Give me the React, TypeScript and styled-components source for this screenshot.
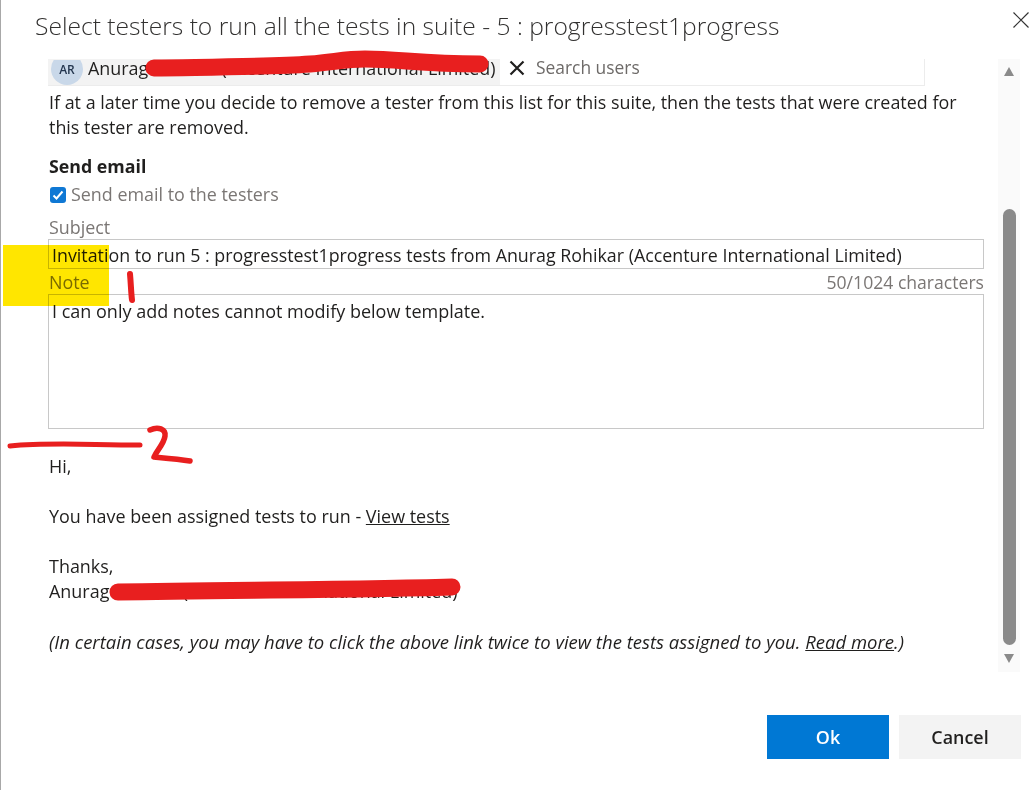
import React from "react";
import styled, { createGlobalStyle } from "styled-components";

const GlobalStyle = createGlobalStyle`
  html, body {
    margin: 0;
    padding: 0;
    background: #fff;
  }
  body {
    font-family: "Open Sans", "Noto Sans", "Liberation Sans", sans-serif;
  }
  svg {
    display: block;
  }
`;

function App() {
  return (
    <Page>
      <GlobalStyle />
      <Header>
        <Title>Select testers to run all the tests in suite - 5 : progresstest1progress</Title>
        <CloseButton>
          <svg width="16" height="16" viewBox="0 0 16 16" fill="none" stroke="#333" strokeWidth="1.2">
            <path d="M0.5 0.5 15.5 15.5M15.5 0.5 0.5 15.5" />
          </svg>
        </CloseButton>
      </Header>
      <Main>
        <Content>
          <Picker>
            <Chip>
              <Avatar>AR</Avatar>
              <ChipName>Anurag Rohikar (Accenture International Limited)</ChipName>
              <ChipRemove>
                <svg width="16" height="16" viewBox="0 0 16 16" fill="none" stroke="#201f1e" strokeWidth="2.2">
                  <path d="M1.5 1.5 14.5 14.5M14.5 1.5 1.5 14.5" />
                </svg>
              </ChipRemove>
            </Chip>
            <SearchHint>Search users</SearchHint>
          </Picker>
          <Paragraph>
            If at a later time you decide to remove a tester from this list for this suite, then the tests that were
            created for this tester are removed.
          </Paragraph>
          <SectionTitle>Send email</SectionTitle>
          <CheckRow>
            <CheckBox>
              <svg width="12" height="12" viewBox="0 0 12 12" fill="none" stroke="#fff" strokeWidth="2">
                <path d="M1.5 6.5 4.5 9.5 10.5 2.5" />
              </svg>
            </CheckBox>
            <MutedText>Send email to the testers</MutedText>
          </CheckRow>
          <SubjectLabel>Subject</SubjectLabel>
          <InputBox>Invitation to run 5 : progresstest1progress tests from Anurag Rohikar (Accenture International Limited)</InputBox>
          <NoteLabelRow>
            <MutedText>Note</MutedText>
            <Counter>50/1024 characters</Counter>
          </NoteLabelRow>
          <NoteBox>I can only add notes cannot modify below template.</NoteBox>
          <MailBody>
            <MailLine>Hi,</MailLine>
            <MailGap />
            <MailLine>
              You have been assigned tests to run - <u>View tests</u>
            </MailLine>
            <MailGap />
            <MailLine>Thanks,</MailLine>
            <MailLine>Anurag Rohikar (Accenture International Limited)</MailLine>
            <MailGap />
            <MailNote>
              (In certain cases, you may have to click the above link twice to view the tests assigned to you.{" "}
              <u>Read more</u>.)
            </MailNote>
          </MailBody>
        </Content>
        <ScrollTrack>
          <ArrowUp />
          <ThumbSpace>
            <Thumb />
          </ThumbSpace>
          <ArrowDown />
        </ScrollTrack>
      </Main>
      <Footer>
        <PrimaryButton>Ok</PrimaryButton>
        <SecondaryButton>Cancel</SecondaryButton>
      </Footer>
      <Highlight />
      <Scribbles width="1036" height="790" viewBox="0 0 1036 790" fill="none" stroke="#e81f1f" strokeLinecap="round" strokeLinejoin="round">
        <path strokeWidth="17" d="M154 68C210 67 270 67 310 64C335 62 345 59 365 59C400 59 420 64 480 64" />
        <path strokeWidth="17" d="M118 592C220 590 350 590 452 587" />
        <path strokeWidth="6" d="M130 274C131 285 131 292 132 300" />
        <path strokeWidth="5" d="M10 446C50 442 90 445 140 445" />
        <path strokeWidth="5.5" d="M150 430C158 426 166 429 165 436C164 444 157 450 154 457C165 458 178 459 190 461" />
      </Scribbles>
    </Page>
  );
}

const Page = styled.div`
  position: relative;
  box-sizing: border-box;
  width: 1036px;
  height: 790px;
  overflow: hidden;
  border-left: 1px solid #a8a8a8;
  background: #fff;
  color: #201f1e;
  font-size: 17.9px;
`;

const Header = styled.div`
  display: flex;
  justify-content: space-between;
  height: 59px;
  padding: 9px 7px 0 34px;
  box-sizing: border-box;
`;

const Title = styled.div`
  font-size: 24.6px;
  font-weight: 300;
  line-height: 33px;
  color: #323130;
  white-space: nowrap;
`;

const CloseButton = styled.div`
  padding-top: 3px;
`;

const Main = styled.div`
  display: flex;
  height: 613px;
  padding-left: 47px;
  padding-right: 16px;
`;

const Content = styled.div`
  width: 936px;
  flex-shrink: 0;
`;

const Picker = styled.div`
  box-sizing: border-box;
  display: flex;
  align-items: stretch;
  width: 877px;
  height: 27px;
  border-right: 1px solid #ececec;
  border-bottom: 1px solid #ececec;
`;

const Chip = styled.div`
  position: relative;
  display: flex;
  align-items: flex-end;
  width: 452px;
  background: #f3f3f3;
`;

const Avatar = styled.div`
  flex-shrink: 0;
  display: flex;
  align-items: center;
  justify-content: center;
  width: 32px;
  height: 32px;
  margin-left: 3px;
  border-radius: 50%;
  background: #c9d8e9;
  color: #24364f;
  font-size: 12px;
  font-weight: 600;
  clip-path: inset(7px 0 0 0);
`;

const ChipName = styled.div`
  margin-left: 5px;
  margin-bottom: 8px;
  line-height: 17px;
  white-space: nowrap;
`;

const ChipRemove = styled.div`
  position: absolute;
  left: 461px;
  top: 1px;
`;

const SearchHint = styled.div`
  margin-left: 36px;
  font-size: 17.4px;
  line-height: 17px;
  color: #6d6a68;
`;

const Paragraph = styled.p`
  margin: 4px 0 0 1px;
  line-height: 25px;
  width: 910px;
`;

const SectionTitle = styled.div`
  margin: 14px 0 0 1px;
  font-size: 17.8px;
  line-height: 25px;
  font-weight: 700;
`;

const CheckRow = styled.div`
  display: flex;
  align-items: center;
  gap: 5px;
  height: 25px;
  margin-top: 3px;
`;

const CheckBox = styled.div`
  display: flex;
  align-items: center;
  justify-content: center;
  width: 16px;
  height: 16px;
  margin-left: 2px;
  border-radius: 3px;
  background: #0f78d4;
`;

const MutedText = styled.span`
  color: #7a7674;
  line-height: 25px;
`;

const Counter = styled(MutedText)`
  font-size: 17.6px;
`;

const SubjectLabel = styled(MutedText)`
  display: block;
  margin: 8px 0 0 1px;
`;

const InputBox = styled.div`
  box-sizing: border-box;
  height: 30px;
  margin-top: -1px;
  padding: 0 3px;
  border: 1px solid #c8c8c8;
  font-size: 17.84px;
  line-height: 30px;
  white-space: nowrap;
`;

const NoteLabelRow = styled.div`
  display: flex;
  justify-content: space-between;
  height: 24px;
  margin-top: 1px;
  padding-left: 1px;
`;

const NoteBox = styled.div`
  box-sizing: border-box;
  height: 135px;
  padding: 4px 3px;
  border: 1px solid #c8c8c8;
  font-size: 18px;
  line-height: 25px;
`;

const MailBody = styled.div`
  margin: 25px 0 0 1px;
`;

const MailLine = styled.div`
  font-size: 17.95px;
  line-height: 25px;
  white-space: nowrap;
`;

const MailNote = styled(MailLine)`
  font-size: 18.5px;
  font-style: italic;
`;

const MailGap = styled.div`
  height: 25px;
`;

const ScrollTrack = styled.div`
  box-sizing: border-box;
  display: flex;
  flex-direction: column;
  align-items: center;
  width: 22px;
  margin-left: 14px;
  padding: 8px 0 9px;
  background: #fafafa;
`;

const ArrowUp = styled.div`
  width: 0;
  height: 0;
  border-left: 5.5px solid transparent;
  border-right: 5.5px solid transparent;
  border-bottom: 9px solid #8a8a8a;
`;

const ArrowDown = styled.div`
  width: 0;
  height: 0;
  border-left: 5.5px solid transparent;
  border-right: 5.5px solid transparent;
  border-top: 9px solid #8a8a8a;
`;

const ThumbSpace = styled.div`
  flex: 1;
  display: flex;
  align-items: flex-end;
  padding-bottom: 9px;
`;

const Thumb = styled.div`
  width: 13px;
  height: 436px;
  border-radius: 7px;
  background: #8a8a8a;
`;

const Footer = styled.div`
  display: flex;
  justify-content: flex-end;
  gap: 10px;
  margin-top: 43px;
  padding-right: 15px;
`;

const PrimaryButton = styled.div`
  width: 122px;
  height: 44px;
  background: #0078d4;
  color: #fff;
  font-weight: 600;
  line-height: 44px;
  text-align: center;
`;

const SecondaryButton = styled(PrimaryButton)`
  background: #f3f3f3;
  color: #201f1e;
`;

const Highlight = styled.div`
  position: absolute;
  left: 2px;
  top: 245px;
  width: 106px;
  height: 61px;
  background: #ffe600;
  mix-blend-mode: multiply;
`;

const Scribbles = styled.svg`
  position: absolute;
  left: -1px;
  top: 0;
  pointer-events: none;
`;

export default App;
